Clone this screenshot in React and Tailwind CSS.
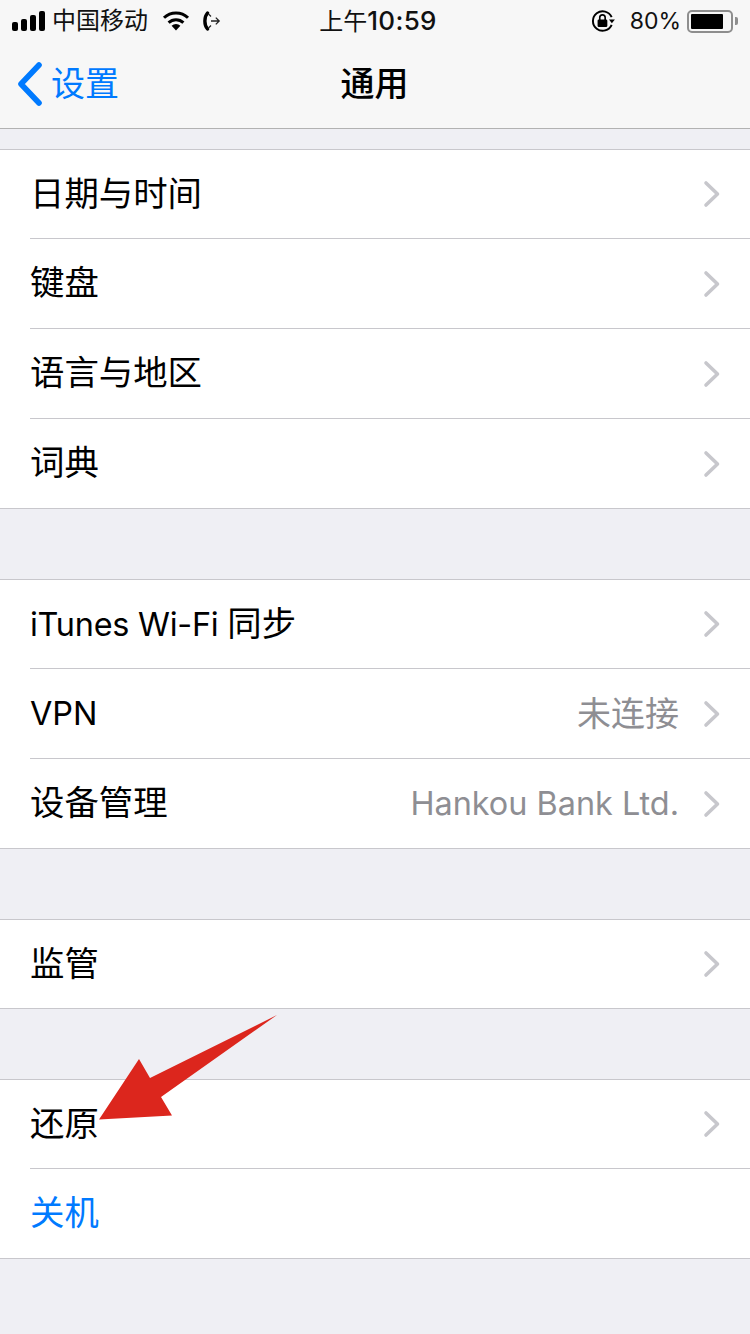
import React from "react";

const FONT = "font-['Inter','Noto_Sans_CJK_SC',sans-serif]";

function Chevron() {
  return (
    <svg width="18" height="28" viewBox="0 0 18 28" className="shrink-0">
      <path d="M3 3 L14.5 14 L3 25" fill="none" stroke="#c7c7cc" strokeWidth="3.6" strokeLinecap="round" strokeLinejoin="round" />
    </svg>
  );
}

function Latin({ children, tight }) {
  return <span className={`text-[32.4px] ${tight ? "tracking-[-0.25px]" : ""}`}>{children}</span>;
}

function Row({ label, value, first, last, blue }) {
  return (
    <div className={`bg-white pl-[30px] ${first ? "h-[89px]" : "h-[90px]"} ${last ? "border-b border-[#c8c7cc]" : ""}`}>
      <div className={`h-full flex items-center justify-between pr-[29px] ${last ? "" : "border-b border-[#c8c7cc]"}`}>
        <span className={`text-[34.4px] leading-none ${blue ? "text-[#007aff]" : "text-black"}`}>{label}</span>
        {!blue && (
          <div className="flex items-center gap-[24px]">
            {value && <span className="text-[34px] leading-none text-[#8e8e93]">{value}</span>}
            <Chevron />
          </div>
        )}
      </div>
    </div>
  );
}

function Group({ children, className }) {
  return <div className={`border-t border-[#c8c7cc] ${className}`}>{children}</div>;
}

function StatusBar() {
  return (
    <div className="h-[40px] grid grid-cols-[1fr_auto_1fr] items-center px-[12px] pt-[2px] text-black">
      <div className="flex items-center">
        <div className="flex items-end gap-[3px] h-[20px]">
          <div className="w-[6px] h-[9px] rounded-[2px] bg-black" />
          <div className="w-[6px] h-[12px] rounded-[2px] bg-black" />
          <div className="w-[6px] h-[16px] rounded-[2px] bg-black" />
          <div className="w-[6px] h-[20px] rounded-[2px] bg-black" />
        </div>
        <span className="ml-[7px] text-[24px] leading-none text-[#111]">中国移动</span>
        <svg width="28" height="20" viewBox="0 0 28 20" className="ml-[14px]">
          <path d="M14 19.5 L9.6 14.8 A6.4 6.4 0 0 1 18.4 14.8 Z" fill="#000" />
          <path d="M6.6 11.6 A10.8 10.8 0 0 1 21.4 11.6" fill="none" stroke="#000" strokeWidth="3" />
          <path d="M2 6.8 A17.2 17.2 0 0 1 26 6.8" fill="none" stroke="#000" strokeWidth="3" />
        </svg>
        <svg width="20" height="20" viewBox="0 0 20 20" className="ml-[12px]">
          <path d="M5.5 2 C2 6 2 14 5.5 18" fill="none" stroke="#000" strokeWidth="3.4" strokeLinecap="round" />
          <path d="M9 10 H17 M13.8 6.6 L17.2 10 L13.8 13.4" fill="none" stroke="#222" strokeWidth="1.3" />
          <path d="M6.5 3 L9 5.5 M6.5 17 L9 14.5" fill="none" stroke="#222" strokeWidth="1.2" />
        </svg>
      </div>
      <span className="leading-none text-[#111] text-[24px] ml-[6px]">
        上午<span className="text-[26px] font-medium tracking-[0.3px]">10:59</span>
      </span>
      <div className="flex items-center justify-end">
        <svg width="26" height="24" viewBox="0 0 24 22">
          <path d="M20 7.5 A9 9 0 1 0 20 14.5" fill="none" stroke="#000" strokeWidth="1.8" />
          <path d="M17.5 9.5 H23 L20.2 13 Z" fill="#000" />
          <rect x="7" y="9.5" width="9" height="7" rx="1.2" fill="#000" />
          <path d="M9 10 V7.8 A2.5 2.5 0 0 1 14 7.8 V10" fill="none" stroke="#000" strokeWidth="1.5" />
        </svg>
        <span className="ml-[14px] text-[23px] leading-none text-[#111]">80%</span>
        <div className="ml-[6px] w-[46px] h-[23px] rounded-[5px] border-2 border-[#8e8e8e] p-[2px]">
          <div className="w-[32px] h-full bg-black rounded-[1px]" />
        </div>
        <div className="ml-[2px] w-[3px] h-[8px] rounded-r-[2px] bg-[#8e8e8e]" />
      </div>
    </div>
  );
}

function NavBar() {
  return (
    <div className="h-[88px] grid grid-cols-[1fr_auto_1fr] items-center pl-[17px]">
      <div className="flex items-center text-[#007aff]">
        <svg width="26" height="44" viewBox="0 0 26 44">
          <path d="M22 3 L4 22 L22 41" fill="none" stroke="#007aff" strokeWidth="5.6" strokeLinecap="round" strokeLinejoin="round" />
        </svg>
        <span className="ml-[8px] text-[34px] leading-none">设置</span>
      </div>
      <span className="text-[34px] leading-none font-medium text-black -ml-[18px]">通用</span>
      <div />
    </div>
  );
}

export default function App() {
  return (
    <div className={`relative w-[750px] h-[1334px] overflow-hidden bg-[#efeff4] ${FONT}`}>
      <div className="bg-[#f7f7f7] border-b border-[#b2b2b2] h-[129px]">
        <StatusBar />
        <NavBar />
      </div>

      <Group className="mt-[20px]">
        <Row first label="日期与时间" />
        <Row label="键盘" />
        <Row label="语言与地区" />
        <Row last label="词典" />
      </Group>

      <Group className="mt-[70px]">
        <Row first label={<><Latin tight>iTunes Wi-Fi </Latin>同步</>} />
        <Row label={<Latin>VPN</Latin>} value="未连接" />
        <Row last label="设备管理" value={<Latin>Hankou Bank Ltd.</Latin>} />
      </Group>

      <Group className="mt-[70px]">
        <Row first last label="监管" />
      </Group>

      <Group className="mt-[70px]">
        <Row first label="还原" />
        <Row last blue label="关机" />
      </Group>

      {/* red annotation arrow over the list */}
      <svg width="190" height="115" viewBox="0 0 190 115" className="absolute left-[95px] top-[1010px]">
        <path d="M4 109.5 L44 49 L55 68 L182 5 L66 87 L77 105.5 Z" fill="#dc261d" />
      </svg>
    </div>
  );
}
